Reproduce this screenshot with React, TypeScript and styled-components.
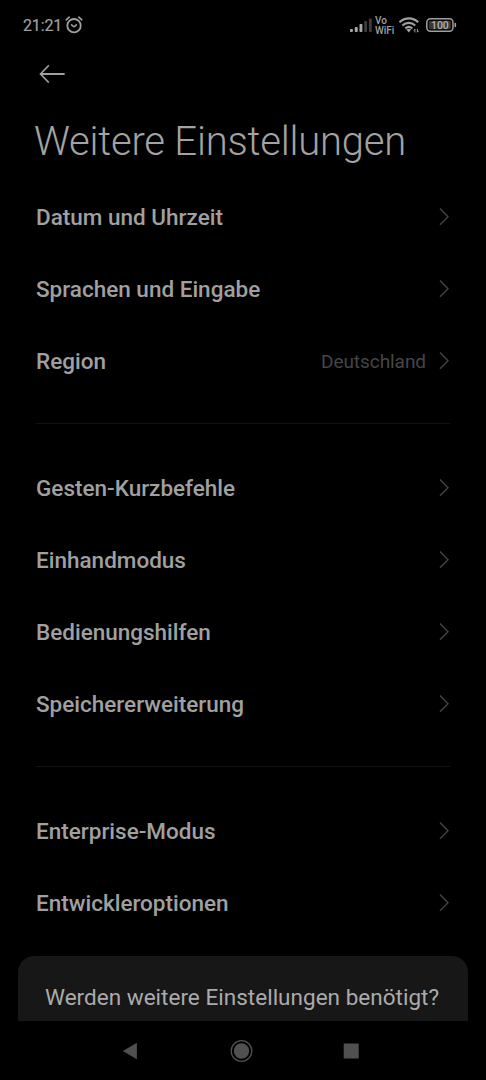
import React from "react";
import styled, { createGlobalStyle } from "styled-components";

const GlobalStyle = createGlobalStyle`
  * { box-sizing: border-box; }
  body { margin: 0; background: #000; font-family: Roboto, "Liberation Sans", sans-serif; }
`;

const Screen = styled.div`
  display: flex;
  flex-direction: column;
  width: 486px;
  height: 1080px;
  overflow: hidden;
  background: #000;
  color: #a0a0a0;
`;

const StatusBar = styled.header`
  display: flex;
  flex: none;
  align-items: center;
  justify-content: space-between;
  height: 50px;
  padding: 0 29px 0 23px;
`;

const StatusGroup = styled.div<{ $gap: number }>`
  display: flex;
  align-items: center;
  gap: ${(p) => p.$gap}px;
  svg { display: block; }
`;

const Clock = styled.span`
  padding-top: 2px;
  font-size: 16px;
  line-height: 20px;
  letter-spacing: -0.15px;
  -webkit-text-stroke: 0.2px currentColor;
`;

const VoWifi = styled.span`
  display: flex;
  flex-direction: column;
  width: 20px;
  padding-top: 1px;
  font-size: 10px;
  font-weight: 500;
  line-height: 9.5px;
`;

const TopBar = styled.div`
  flex: none;
  height: 48px;
  padding: 13px 0 0 38px;
`;

const BackButton = styled.button`
  display: block;
  padding: 0;
  border: 0;
  background: none;
  color: inherit;
  svg { display: block; }
`;

const Title = styled.h1`
  flex: none;
  height: 83px;
  margin: 0;
  padding: 20px 0 0 34px;
  color: #a3a3a3;
  font-size: 40px;
  font-weight: 300;
  line-height: 48px;
  letter-spacing: -0.21px;
  white-space: nowrap;
`;

const List = styled.main`
  display: flex;
  flex: none;
  flex-direction: column;
  height: 775px;
  padding: 0 36px;
`;

const Row = styled.div`
  display: flex;
  flex: none;
  align-items: center;
  height: 72px;
  svg { display: block; }
`;

const RowLabel = styled.span`
  flex: 1;
  font-size: 22.5px;
  font-weight: 500;
  line-height: 28px;
`;

const RowValue = styled.span`
  margin-right: 13px;
  padding-top: 1px;
  color: #464646;
  font-size: 19px;
  line-height: 26px;
  letter-spacing: -0.06px;
`;

const Divider = styled.hr`
  flex: none;
  width: 100%;
  height: 1px;
  margin: 26px 0 28px;
  border: 0;
  background: #121212;
`;

const Sheet = styled.section`
  flex: none;
  height: 65px;
  margin: 0 18px;
  padding: 27px 0 0 27px;
  border-radius: 16px 16px 0 0;
  background: #171717;
  color: #ababab;
  font-size: 22.5px;
  line-height: 28px;
  letter-spacing: 0.02px;
  white-space: nowrap;
`;

const NavBar = styled.nav`
  display: flex;
  flex: none;
  align-items: center;
  justify-content: space-between;
  height: 59px;
  padding: 0 127px 0 122px;
  color: #505050;
  svg { display: block; }
`;

const AlarmIcon = () => (
  <svg width="18" height="18" viewBox="0 0 18 18" fill="none" stroke="currentColor" strokeLinecap="round">
    <circle cx="9" cy="9.7" r="6.7" strokeWidth="1.8" />
    <path d="M1.2 3.8 4.2 1.2M16.8 3.8 13.8 1.2" strokeWidth="1.7" />
    <path d="M6.6 8.8 9 10.8 11.4 8.8" strokeWidth="1.5" />
  </svg>
);

const bars = [
  { x: 0, h: 3, on: true },
  { x: 4.8, h: 5, on: true },
  { x: 9.5, h: 8, on: true },
  { x: 14.2, h: 11, on: false },
  { x: 18.9, h: 13.5, on: false },
];

const SignalIcon = () => (
  <svg width="22" height="14" viewBox="0 0 22 14">
    {bars.map((b) => (
      <rect key={b.x} x={b.x} y={14 - b.h} width="2.9" height={b.h} rx="0.8" fill={b.on ? "#a8a8a8" : "#3c3c3c"} />
    ))}
  </svg>
);

const WifiIcon = () => (
  <svg width="24" height="16" viewBox="0 0 24 16" fill="none" stroke="currentColor" strokeWidth="2.1">
    <path d="M.4 5.3C5.8.1 13.8.1 19.2 5.3M3.4 8.6C7.1 5 12.5 5 16.2 8.6M6.3 11.5C8.4 9.5 11.2 9.5 13.3 11.5" />
    <path d="M7.4 12.6Q9.8 10.9 12.2 12.6L9.8 15.5Z" fill="currentColor" stroke="none" />
    <path d="M15.9 15.4V12.2M14.8 13.4 15.9 12.2M18.4 11.9V15.2M19.5 14 18.4 15.2" strokeWidth="1" />
  </svg>
);

const BatteryIcon = () => (
  <svg width="31" height="14" viewBox="0 0 31 14">
    <rect x=".8" y=".8" width="26.2" height="12.4" rx="3.6" fill="none" stroke="#a0a0a0" strokeWidth="1.5" />
    <rect x="2.8" y="2.8" width="22.2" height="8.4" rx="1.8" fill="#373737" />
    <rect x="28.5" y="4.7" width="1.6" height="4.6" rx=".8" fill="#a0a0a0" />
    <text x="13.9" y="10.8" textAnchor="middle" fontFamily="Roboto, sans-serif" fontSize="10.5" fontWeight="500" fill="#b4b4b4">
      100
    </text>
  </svg>
);

const BackIcon = () => (
  <svg width="28" height="20" viewBox="0 0 28 20" fill="none" stroke="currentColor" strokeWidth="1.8" strokeLinecap="round" strokeLinejoin="round">
    <path d="M26 11H2.5M10.2 3 2.5 11 10.2 19" />
  </svg>
);

const Chevron = () => (
  <svg width="11" height="18" viewBox="0 0 11 18" fill="none" stroke="#444" strokeWidth="1.4">
    <path d="M1 .6 9 8.7 1 16.8" />
  </svg>
);

type Item = { label: string; value?: string };

const groups: Item[][] = [
  [{ label: "Datum und Uhrzeit" }, { label: "Sprachen und Eingabe" }, { label: "Region", value: "Deutschland" }],
  [
    { label: "Gesten-Kurzbefehle" },
    { label: "Einhandmodus" },
    { label: "Bedienungshilfen" },
    { label: "Speichererweiterung" },
  ],
  [{ label: "Enterprise-Modus" }, { label: "Entwickleroptionen" }],
];

export default function App() {
  return (
    <Screen>
      <GlobalStyle />
      <StatusBar>
        <StatusGroup $gap={3}>
          <Clock>21:21</Clock>
          <AlarmIcon />
        </StatusGroup>
        <StatusGroup $gap={3.5}>
          <SignalIcon />
          <VoWifi>
            <span>Vo</span>
            <span>WiFi</span>
          </VoWifi>
          <WifiIcon />
          <BatteryIcon />
        </StatusGroup>
      </StatusBar>
      <TopBar>
        <BackButton aria-label="Zurück">
          <BackIcon />
        </BackButton>
      </TopBar>
      <Title>Weitere Einstellungen</Title>
      <List>
        {groups.map((group, index) => (
          <React.Fragment key={index}>
            {index > 0 && <Divider />}
            {group.map((item) => (
              <Row key={item.label}>
                <RowLabel>{item.label}</RowLabel>
                {item.value && <RowValue>{item.value}</RowValue>}
                <Chevron />
              </Row>
            ))}
          </React.Fragment>
        ))}
      </List>
      <Sheet>Werden weitere Einstellungen benötigt?</Sheet>
      <NavBar>
        <svg width="15" height="18" viewBox="0 0 15 18" fill="currentColor">
          <path d="M.8 9 14.9.8v16.4Z" />
        </svg>
        <svg width="26" height="24" viewBox="0 0 26 24" fill="currentColor">
          <circle cx="14.5" cy="12" r="10.3" fill="none" stroke="currentColor" strokeWidth="1.3" />
          <circle cx="14.5" cy="12" r="7.7" />
        </svg>
        <svg width="16" height="16" viewBox="0 0 16 16" fill="currentColor">
          <rect x=".7" y=".5" width="15" height="15" />
        </svg>
      </NavBar>
    </Screen>
  );
}
